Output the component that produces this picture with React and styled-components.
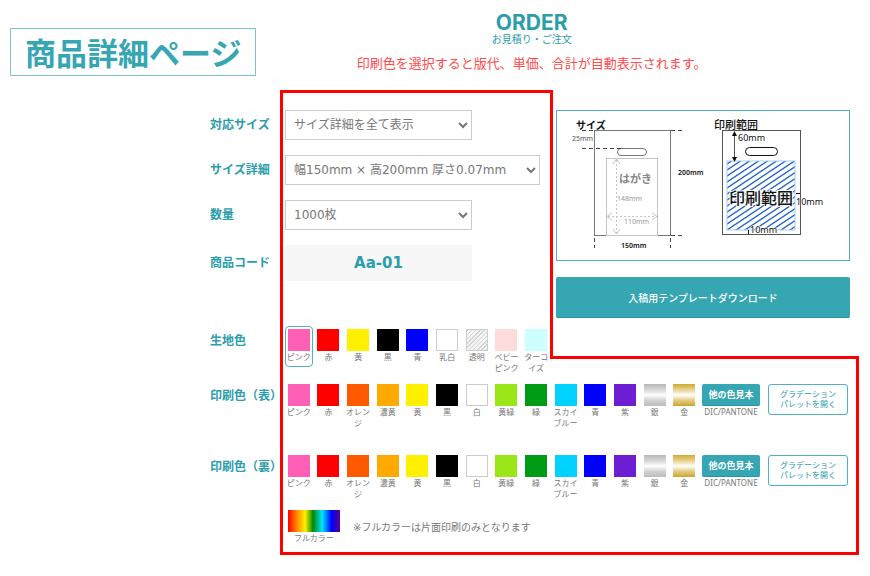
import styled, { createGlobalStyle, css } from "styled-components";

const teal = "#37a6b3";
const tealText = "#2b9dab";
const red = "#ff0000";

const GlobalStyle = createGlobalStyle`
  * {
    box-sizing: border-box;
  }
  body {
    margin: 0;
    background: #fff;
    color: #777;
    font-family: "DejaVu Sans", "Noto Sans CJK JP", sans-serif;
    font-size: 12px;
  }
  button,
  select,
  input {
    margin: 0;
    font-family: inherit;
  }
`;

// Header
const Header = styled.header`
  display: flex;
  align-items: flex-start;
  padding: 13px 63px 0 10px;
`;

const PageTitle = styled.h1`
  flex-shrink: 0;
  margin: 15px 0 0;
  padding: 0 14px;
  border: 1px solid #7cc5ce;
  color: ${teal};
  font-family: "Noto Sans CJK JP", sans-serif;
  font-size: 31px;
  line-height: 46px;
`;

const OrderHeading = styled.div`
  flex: 1;
  text-align: center;
`;

const OrderTitle = styled.h2`
  margin: 0;
  color: ${tealText};
  font-family: Inter, sans-serif;
  font-size: 21px;
  line-height: 20px;
`;

const OrderSubTitle = styled.p`
  margin: 0;
  color: ${tealText};
  font-size: 10px;
  line-height: 14px;
`;

const Notice = styled.p`
  margin: 8px 0 0;
  color: #ff4b4b;
  font-size: 13px;
  line-height: 18px;
  white-space: nowrap;
`;

// Form
const OrderForm = styled.form`
  margin: 14px 11px 0 210px;
`;

const Upper = styled.div`
  display: grid;
  grid-template-columns: 1fr 309px;
`;

const Fields = styled.div`
  position: relative;
  display: flex;
  flex-direction: column;
  gap: 15px;
  padding-top: 20px;

  &::before {
    content: "";
    position: absolute;
    inset: 0 0 0 70px;
    border-top: 3px solid ${red};
    border-left: 3px solid ${red};
    pointer-events: none;
  }
`;

const Row = styled.div`
  position: relative;
  display: grid;
  grid-template-columns: 75px 1fr;
  align-items: ${({ $top }) => ($top ? "start" : "center")};
`;

const labelText = css`
  color: ${tealText};
  font-size: 12px;
  font-weight: bold;
  line-height: 30px;
  white-space: nowrap;
`;

const FieldLabel = styled.label`
  ${labelText}
`;

const GroupLabel = styled.span`
  ${labelText}
`;

const Select = styled.select`
  width: ${({ $wide }) => ($wide ? "255px" : "187px")};
  height: 30px;
  padding: 0 0 0 4px;
  border: 1px solid #ccc;
  border-radius: 0;
  background-color: #fff;
  color: #777;
  font-size: 12px;
`;

const ProductCode = styled.output`
  width: 187px;
  background: #f7f7f7;
  color: ${tealText};
  font-size: 15px;
  font-weight: bold;
  line-height: 36px;
  text-align: center;
`;

const FabricRow = styled(Row)`
  margin-top: 30px;
`;

// Aside
const Aside = styled.div`
  display: flex;
  flex-direction: column;
`;

const AsideBody = styled.div`
  display: flex;
  flex-direction: column;
  gap: 16px;
  padding: 20px 9px 38px 3px;
  border-left: 3px solid ${red};
`;

const AsideCorner = styled.div`
  flex: 1;
  border-top: 3px solid ${red};
  border-right: 3px solid ${red};
`;

const DiagramBox = styled.div`
  border: 1px solid #4db4bf;

  svg {
    display: block;
    width: 100%;
  }
`;

const DownloadButton = styled.button`
  height: 41px;
  border: 0;
  border-bottom: 1px solid #1f97a5;
  border-radius: 2px;
  background: ${teal};
  color: #fff;
  font-size: 10px;
  font-weight: 500;
  cursor: pointer;
`;

// Lower
const Lower = styled.div`
  position: relative;
  display: flex;
  flex-direction: column;
  gap: 19px;
  padding: 3px 11px 7px 0;

  &::before {
    content: "";
    position: absolute;
    inset: 0 0 0 70px;
    border: 3px solid ${red};
    border-top: 0;
    pointer-events: none;
  }
`;

const PrintRow = styled(Row)`
  grid-template-columns: 75px 1fr 70px 80px;
`;

const Swatches = styled.div`
  display: grid;
  grid-template-columns: repeat(${({ $count }) => $count}, 1fr);
  column-gap: 2px;
  align-items: start;
`;

const SwatchLabel = styled.label`
  display: flex;
  flex-direction: column;
  align-items: center;
  gap: 1px;
  padding: 2px 0 3px;
  border: 1px solid transparent;
  border-radius: 4px;
  font-size: 8px;
  line-height: 11px;
  text-align: center;
  cursor: pointer;

  &:has(input:checked) {
    border-color: #4db4bf;
  }
`;

const SwatchInput = styled.input`
  appearance: none;
  width: ${({ $wide }) => ($wide ? "52px" : "22px")};
  height: 22px;
  border: ${({ $outlined }) => ($outlined ? "1px solid #ccc" : "0")};
  background: ${({ $fill }) => $fill};
  cursor: pointer;
`;

const OtherColors = styled.div`
  padding: 3px 8px 0 4px;
  font-size: 8px;
  line-height: 11px;
  text-align: center;
`;

const OtherColorsCaption = styled.div`
  font-family: "Noto Sans", sans-serif;
`;

const OtherColorsButton = styled.button`
  width: 100%;
  height: 22px;
  padding: 0;
  border: 0;
  border-bottom: 1px solid #1f97a5;
  border-radius: 2px;
  background: ${teal};
  color: #fff;
  font-size: 9px;
  font-weight: bold;
  cursor: pointer;
`;

const PaletteButton = styled.button`
  height: 31px;
  margin: 3px 0 0;
  padding: 0;
  border: 1px solid #4db4bf;
  border-radius: 3px;
  background: #fff;
  color: ${tealText};
  font-size: 8px;
  line-height: 10px;
  cursor: pointer;
`;

const FullColorRow = styled.div`
  position: relative;
  display: flex;
  align-items: center;
  gap: 12px;
  margin: -16px 0 0 77px;
`;

const FullColorNote = styled.p`
  margin: 0;
  font-size: 10px;
  line-height: 14px;
`;

const silver = "linear-gradient(#b8b8b8, #dcdcdc 30%, #fff 50%, #d0d0d0 75%, #bcbcbc)";
const gold = "linear-gradient(#cfa92e, #ead9a0 30%, #fff 50%, #e3cb80 75%, #cba62a)";
const clear = "repeating-linear-gradient(135deg, #d4d4d4 0 1px, #f4f4f4 1px 3px)";
const fullColor =
  "linear-gradient(90deg, #f00, #ff7a00 15%, #fff000 33%, #008a00 48%, #00e5ff 66%, #00f 84%, #5a008a)";

const fabricColors = [
  { name: "ピンク", fill: "#ff5fb4" },
  { name: "赤", fill: "#ff0000" },
  { name: "黄", fill: "#fff000" },
  { name: "黒", fill: "#000" },
  { name: "青", fill: "#0000ff" },
  { name: "乳白", fill: "#fff", outlined: true },
  { name: "透明", fill: clear, outlined: true },
  { name: "ベビーピンク", fill: "#ffdcdc" },
  { name: "ターコイズ", fill: "#ccffff" },
];

const printColors = [
  { name: "ピンク", fill: "#ff5fb4" },
  { name: "赤", fill: "#ff0000" },
  { name: "オレンジ", fill: "#ff5a00" },
  { name: "濃黄", fill: "#ffaa00" },
  { name: "黄", fill: "#fff000" },
  { name: "黒", fill: "#000" },
  { name: "白", fill: "#fff", outlined: true },
  { name: "黄緑", fill: "#9be619" },
  { name: "緑", fill: "#009b14" },
  { name: "スカイブルー", fill: "#00d2ff" },
  { name: "青", fill: "#0000ff" },
  { name: "紫", fill: "#6e1ed2" },
  { name: "銀", fill: silver },
  { name: "金", fill: gold },
];

const ColorPicker = ({ group, colors, selected }) => (
  <Swatches $count={colors.length} role="radiogroup" aria-labelledby={`${group}-label`}>
    {colors.map(({ name, fill, outlined }) => (
      <SwatchLabel key={name}>
        <SwatchInput
          type="radio"
          name={group}
          value={name}
          defaultChecked={name === selected}
          $fill={fill}
          $outlined={outlined}
        />
        {name}
      </SwatchLabel>
    ))}
  </Swatches>
);

const PrintColorRow = ({ group, label }) => (
  <PrintRow $top>
    <GroupLabel id={`${group}-label`}>{label}</GroupLabel>
    <ColorPicker group={group} colors={printColors} />
    <OtherColors>
      <OtherColorsButton type="button">他の色見本</OtherColorsButton>
      <OtherColorsCaption>DIC/PANTONE</OtherColorsCaption>
    </OtherColors>
    <PaletteButton type="button">
      グラデーション
      <br />
      パレットを開く
    </PaletteButton>
  </PrintRow>
);

const BagDiagram = () => (
  <svg viewBox="1 1 292 149" fontFamily="'Noto Sans', 'Noto Sans CJK JP', sans-serif">
    <defs>
      <pattern id="hatch" width="9" height="6" patternUnits="userSpaceOnUse">
        <path d="M-9 6L9 -6M-9 12L18 -6M0 12L18 0" stroke="#1f5fc8" strokeWidth="1.4" />
      </pattern>
    </defs>

    {/* bag size */}
    <g fill="none" stroke="#777">
      <rect x="38.5" y="20.5" width="76" height="105" />
      <rect x="61.5" y="38.5" width="29" height="7" rx="3.5" />
      <path d="M26 20.5H38M115 20.5H128M26 38.5H66M115 125.5H128M38.5 128V138M114.5 128V138" stroke="#444" strokeDasharray="4 3" />
    </g>
    <g fill="none" stroke="#c4c4c4">
      <rect x="50.5" y="48.5" width="51" height="77" />
      <path d="M60.5 50V124M52 106.5H101" strokeDasharray="2 2" />
      <path d="M57 54L60.5 49L64 54M57 119L60.5 124L64 119M56 103L51 106.5L56 110M96 103L101 106.5L96 110" />
    </g>
    <text x="20" y="19" fontSize="10" fontWeight="bold" fill="#111">サイズ</text>
    <text x="16" y="31" fontSize="7" fill="#555">25mm</text>
    <text x="63" y="73" fontSize="11" fontWeight="bold" fill="#888">はがき</text>
    <text x="61" y="91" fontSize="7" fill="#999">148mm</text>
    <text x="68" y="114" fontSize="7" fill="#999">110mm</text>
    <text x="122" y="65" fontSize="7" fontWeight="600" fill="#111">200mm</text>
    <text x="65" y="138" fontSize="7" fontWeight="600" fill="#111">150mm</text>

    {/* printable area */}
    <rect x="171" y="51" width="68" height="69" fill="url(#hatch)" stroke="#a9cdf5" />
    <g fill="none" stroke="#555">
      <rect x="166.5" y="20.5" width="78" height="104" />
      <rect x="189.5" y="37.5" width="32" height="8" rx="4" stroke="#111" />
      <path d="M178.5 22V51" />
    </g>
    <path d="M176 26L178.5 21L181 26ZM176 47L178.5 52L181 47Z" fill="#111" />
    <path d="M192.5 120V124M240 83.5H244" stroke="#111" />
    <text x="158" y="19" fontSize="11" fontWeight="500" fill="#111">印刷範囲</text>
    <text x="182" y="31" fontSize="9" fill="#111">60mm</text>
    <text x="173" y="94" fontSize="16" fontWeight="500" fill="#111" stroke="#fff" strokeWidth="2" paintOrder="stroke">印刷範囲</text>
    <text x="240" y="95" fontSize="9" fill="#111" stroke="#fff" strokeWidth="1" paintOrder="stroke">10mm</text>
    <text x="194" y="123" fontSize="9" fill="#111" stroke="#fff" strokeWidth="1" paintOrder="stroke">10mm</text>
  </svg>
);

const App = () => {
  return (
    <>
      <GlobalStyle />
      <Header>
        <PageTitle>商品詳細ページ</PageTitle>
        <OrderHeading>
          <OrderTitle>ORDER</OrderTitle>
          <OrderSubTitle>お見積り・ご注文</OrderSubTitle>
          <Notice>印刷色を選択すると版代、単価、合計が自動表示されます。</Notice>
        </OrderHeading>
      </Header>

      <OrderForm>
        <Upper>
          <Fields>
            <Row>
              <FieldLabel htmlFor="size">対応サイズ</FieldLabel>
              <Select id="size">
                <option>サイズ詳細を全て表示</option>
              </Select>
            </Row>
            <Row>
              <FieldLabel htmlFor="detail">サイズ詳細</FieldLabel>
              <Select id="detail" $wide>
                <option>幅150mm × 高200mm 厚さ0.07mm</option>
              </Select>
            </Row>
            <Row>
              <FieldLabel htmlFor="quantity">数量</FieldLabel>
              <Select id="quantity">
                <option>1000枚</option>
              </Select>
            </Row>
            <Row>
              <FieldLabel htmlFor="code">商品コード</FieldLabel>
              <ProductCode id="code">Aa-01</ProductCode>
            </Row>
            <FabricRow $top>
              <GroupLabel id="fabric-label">生地色</GroupLabel>
              <ColorPicker group="fabric" colors={fabricColors} selected="ピンク" />
            </FabricRow>
          </Fields>

          <Aside>
            <AsideBody>
              <DiagramBox>
                <BagDiagram />
              </DiagramBox>
              <DownloadButton type="button">入稿用テンプレートダウンロード</DownloadButton>
            </AsideBody>
            <AsideCorner />
          </Aside>
        </Upper>

        <Lower>
          <PrintColorRow group="front" label="印刷色（表）" />
          <PrintColorRow group="back" label="印刷色（裏）" />
          <FullColorRow>
            <SwatchLabel>
              <SwatchInput type="radio" name="back" value="フルカラー" $fill={fullColor} $wide />
              フルカラー
            </SwatchLabel>
            <FullColorNote>※フルカラーは片面印刷のみとなります</FullColorNote>
          </FullColorRow>
        </Lower>
      </OrderForm>
    </>
  );
};

export default App;
